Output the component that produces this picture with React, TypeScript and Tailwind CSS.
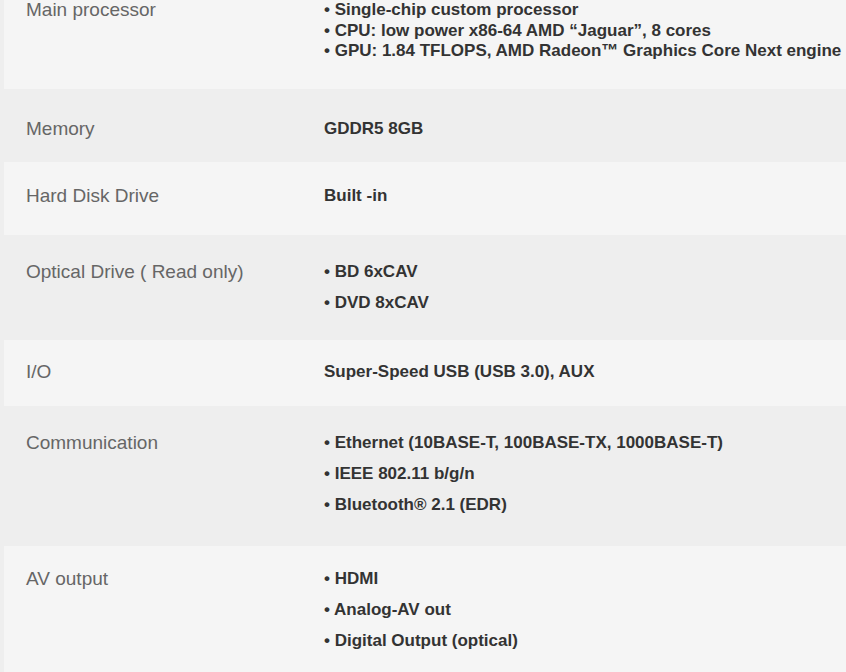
type Spec = {
  label: string;
  items: string[];
  bullets: boolean;
  rowClass: string;
  lineClass: string;
};

const specs: Spec[] = [
  {
    label: "Main processor",
    items: [
      "Single-chip custom processor",
      "CPU: low power x86-64 AMD “Jaguar”, 8 cores",
      "GPU: 1.84 TFLOPS, AMD Radeon™ Graphics Core Next engine",
    ],
    bullets: true,
    rowClass: "ml-1 bg-[#f5f5f5] pt-0 pb-[27.5px]",
    lineClass: "leading-[20.5px]",
  },
  {
    label: "Memory",
    items: ["GDDR5 8GB"],
    bullets: false,
    rowClass: "pl-1 pt-[24px] pb-[18px]",
    lineClass: "leading-[31px]",
  },
  {
    label: "Hard Disk Drive",
    items: ["Built -in"],
    bullets: false,
    rowClass: "ml-1 bg-[#f5f5f5] pt-[18px] pb-[24px]",
    lineClass: "leading-[31px]",
  },
  {
    label: "Optical Drive ( Read only)",
    items: ["BD 6xCAV", "DVD 8xCAV"],
    bullets: true,
    rowClass: "pl-1 pt-[21px] pb-[22px]",
    lineClass: "leading-[31px]",
  },
  {
    label: "I/O",
    items: ["Super-Speed USB (USB 3.0), AUX"],
    bullets: false,
    rowClass: "ml-1 bg-[#f5f5f5] pt-[16px] pb-[19px]",
    lineClass: "leading-[31px]",
  },
  {
    label: "Communication",
    items: [
      "Ethernet (10BASE-T, 100BASE-TX, 1000BASE-T)",
      "IEEE 802.11 b/g/n",
      "Bluetooth® 2.1 (EDR)",
    ],
    bullets: true,
    rowClass: "pl-1 pt-[21px] pb-[26px]",
    lineClass: "leading-[31px]",
  },
  {
    label: "AV output",
    items: ["HDMI", "Analog-AV out", "Digital Output (optical)"],
    bullets: true,
    rowClass: "ml-1 bg-[#f5f5f5] pt-[17px] pb-[30px]",
    lineClass: "leading-[31px]",
  },
];

function SpecRow({ spec }: { spec: Spec }) {
  return (
    <div className={`flex ${spec.rowClass}`}>
      <div
        className={`w-[298px] shrink-0 pl-[22px] box-content text-[19px] text-[#666666] ${spec.lineClass}`}
      >
        {spec.label}
      </div>
      <ul className={`text-[17px] font-bold text-[#333333] whitespace-nowrap ${spec.lineClass}`}>
        {spec.items.map((item) => (
          <li key={item}>{spec.bullets ? `• ${item}` : item}</li>
        ))}
      </ul>
    </div>
  );
}

export default function App() {
  return (
    <div className="min-h-screen w-[846px] overflow-hidden bg-[#eeeeee] [font-family:'Liberation_Sans',Arial,sans-serif]">
      {specs.map((s) => (
        <SpecRow key={s.label} spec={s} />
      ))}
    </div>
  );
}
